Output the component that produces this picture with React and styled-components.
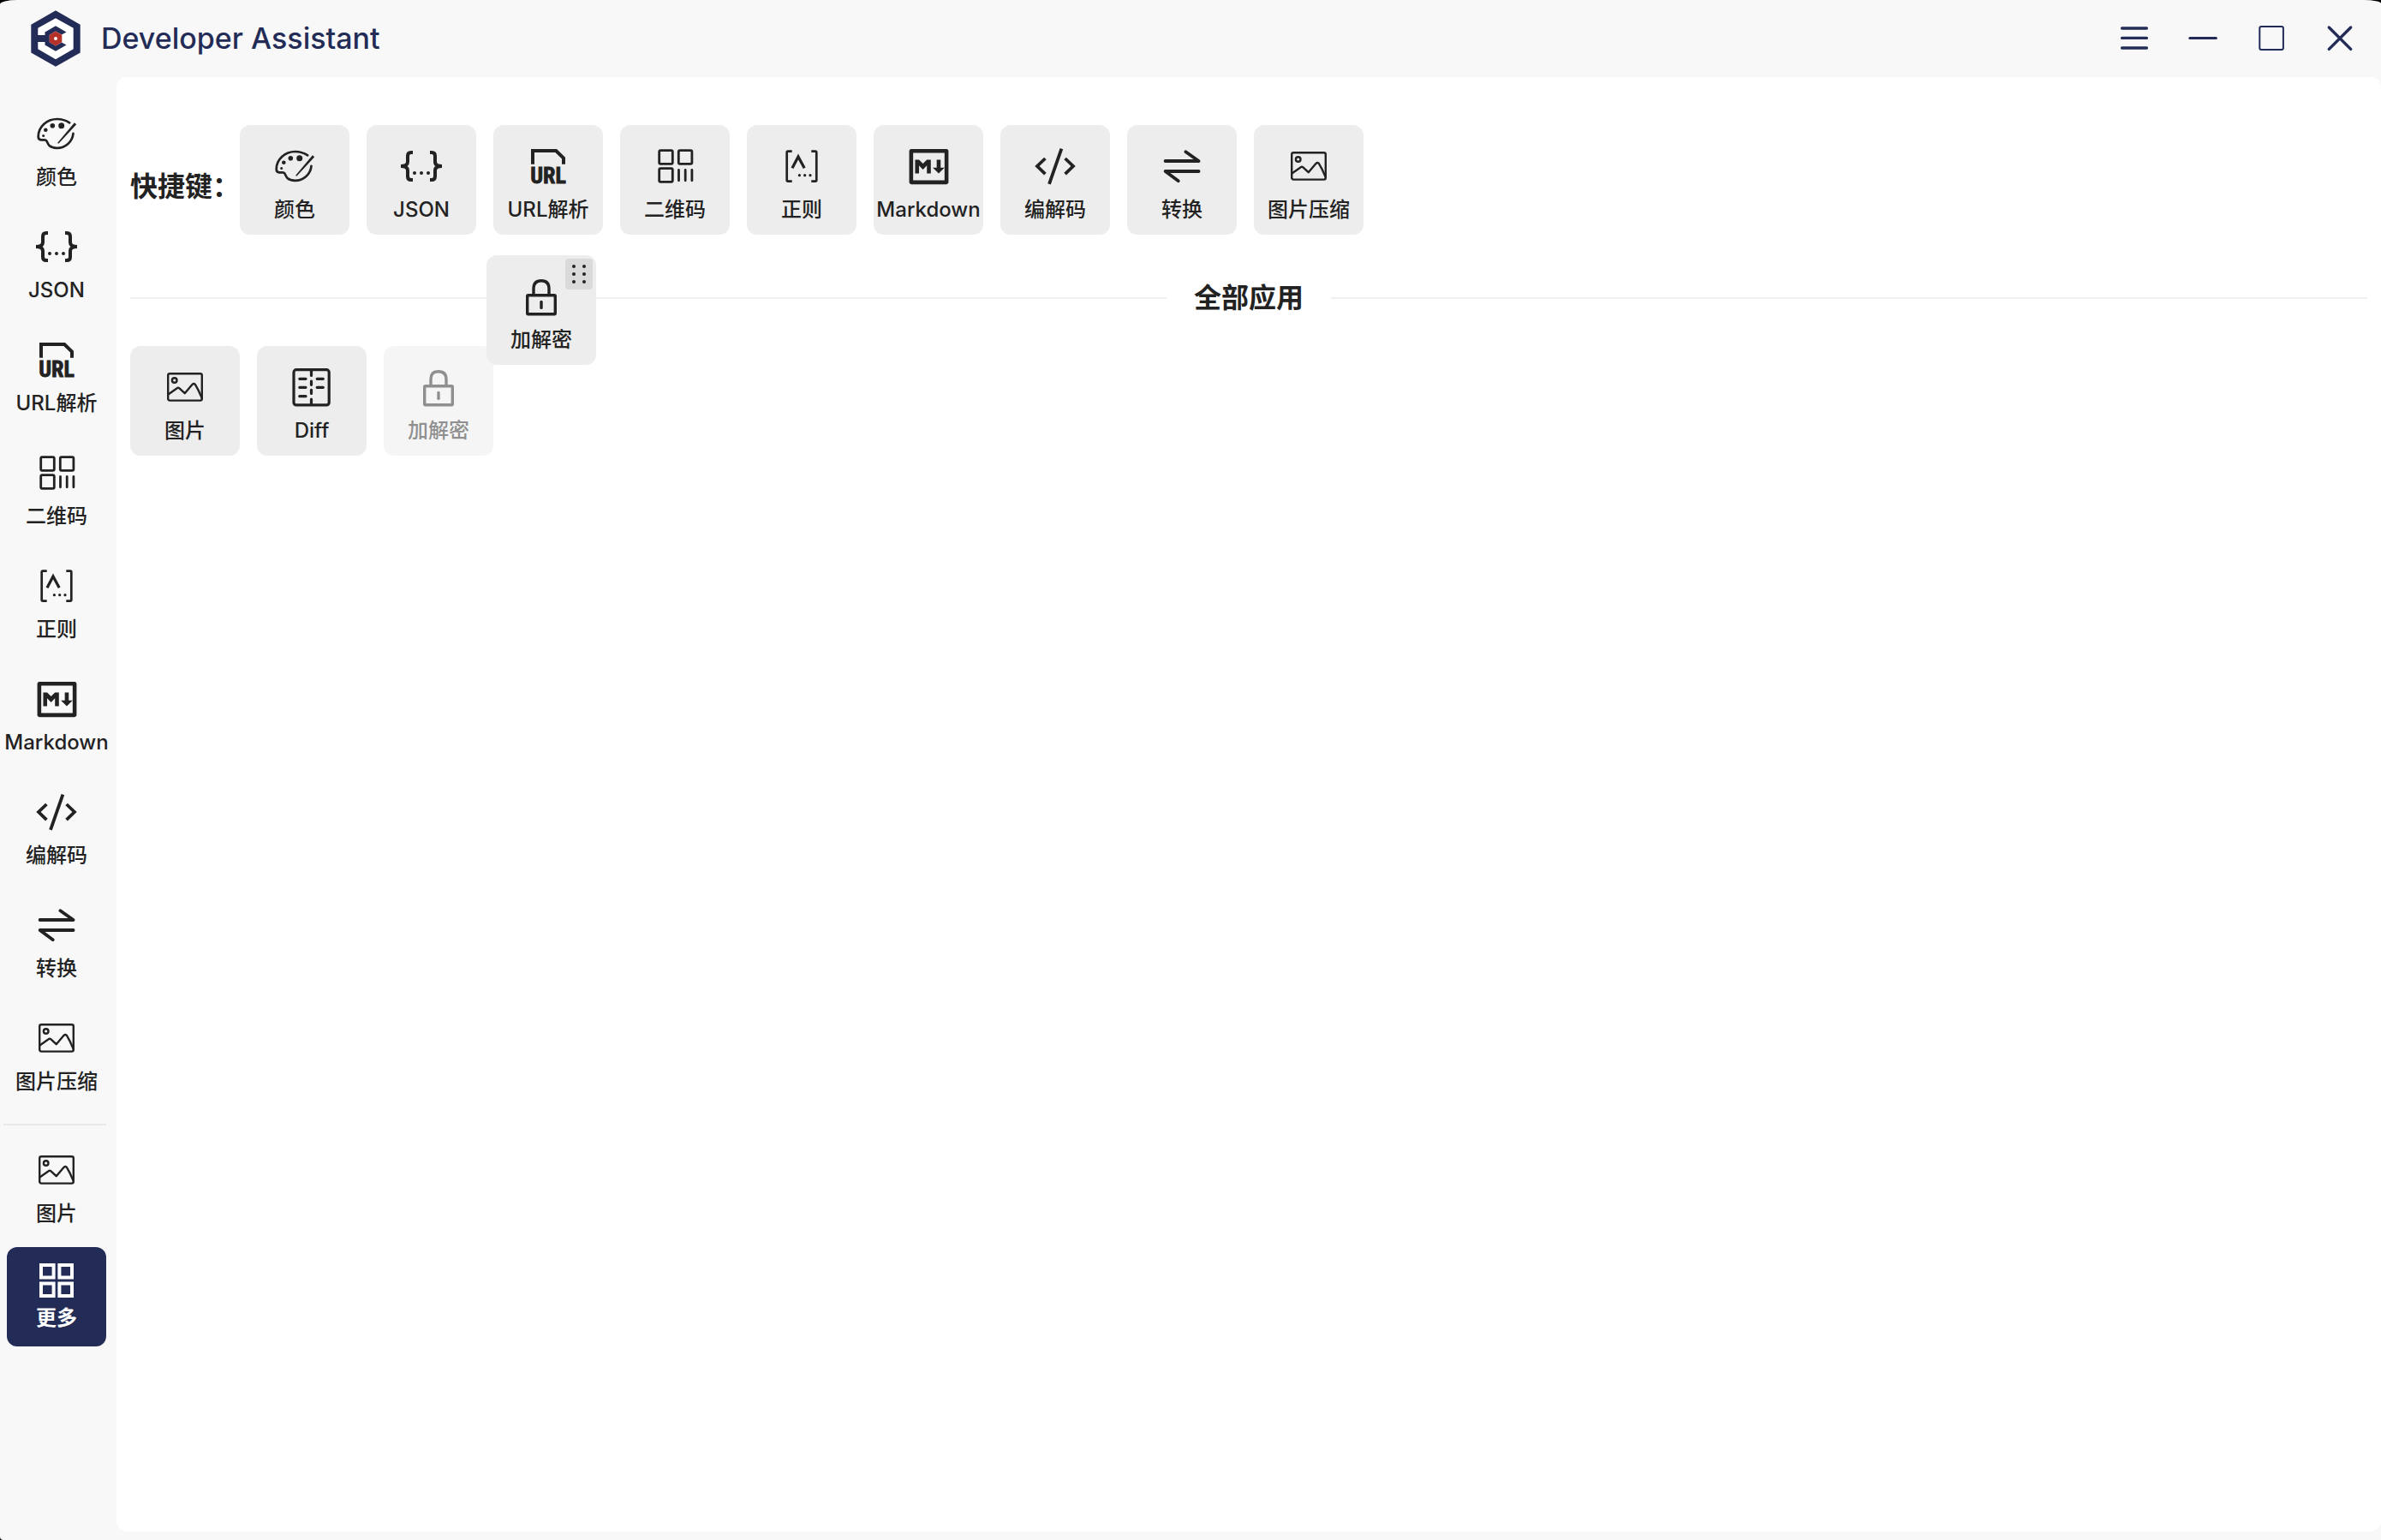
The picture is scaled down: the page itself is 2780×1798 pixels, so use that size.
import React from "react";
import styled, { createGlobalStyle } from "styled-components";
import { RiMarkdownLine } from "react-icons/ri";

const navy = "#232c56";
const ink = "#222222";

const GlobalStyle = createGlobalStyle`
  * { box-sizing: border-box; }
  body {
    margin: 0;
    background: #000;
    color: ${ink};
    font-family: Inter, "Noto Sans CJK SC", sans-serif;
    font-weight: 500;
  }
`;

const Window = styled.div`
  display: flex;
  flex-direction: column;
  min-height: 100vh;
  padding-bottom: 10px;
  background: #f8f8f8;
  border-radius: 20px 20px 0 4px / 5px 4px 0 4px;
`;

const TitleBar = styled.header`
  display: flex;
  align-items: center;
  justify-content: space-between;
  height: 90px;
  padding: 0 28px 0 32px;
  color: ${navy};
`;

const Brand = styled.div`
  display: flex;
  align-items: center;
  gap: 20px;
`;

const BrandName = styled.h1`
  margin: 0;
  font-size: 34px;
  font-weight: 500;
  line-height: 48px;
`;

const WindowControls = styled.div`
  display: flex;
  gap: 40px;
`;

const ControlButton = styled.button`
  display: flex;
  width: 40px;
  height: 40px;
  padding: 0;
  border: 0;
  background: none;
  color: inherit;
`;

const Body = styled.div`
  display: flex;
  flex: 1;
`;

const Sidebar = styled.nav`
  flex: none;
  width: 136px;
  padding: 24px 12px 0 4px;
`;

const NavList = styled.div`
  display: flex;
  flex-direction: column;
  gap: 16px;
  padding-left: 4px;
`;

const NavDivider = styled.hr`
  height: 2px;
  margin: 26px 0 10px;
  border: 0;
  background: #e9e9e9;
`;

const EntryButton = styled.button`
  display: flex;
  flex-direction: column;
  align-items: center;
  gap: 8px;
  padding: 0;
  border: 0;
  border-radius: 12px;
  color: inherit;
  font: inherit;
`;

const NavButton = styled(EntryButton)`
  height: 116px;
  padding-top: 18px;
  gap: ${(p) => (p.$active ? 4 : 8)}px;
  background: ${(p) => (p.$active ? navy : "none")};
  color: ${(p) => (p.$active ? "#fff" : "inherit")};
  font-weight: ${(p) => (p.$active ? 600 : 500)};
`;

const Tile = styled(EntryButton)`
  flex: none;
  width: 128px;
  height: 128px;
  padding-top: 24px;
  background: #ededed;
  opacity: ${(p) => (p.$ghost ? 0.5 : 1)};
`;

const DraggedTile = styled(Tile)`
  position: absolute;
  top: 208px;
  left: 432px;
`;

const DragHandle = styled.span`
  position: absolute;
  top: 4px;
  right: 4px;
  display: flex;
  width: 32px;
  height: 36px;
  border-radius: 4px;
  background: #dadada;
`;

const IconBox = styled.span`
  display: flex;
  align-items: center;
  justify-content: center;
  width: ${(p) => p.$size}px;
  height: ${(p) => p.$size}px;

  svg {
    flex: none;
    overflow: visible;
  }
`;

const Label = styled.span`
  font-size: 24px;
  line-height: 38px;
  white-space: nowrap;
`;

const Content = styled.main`
  position: relative;
  flex: 1;
  padding: 56px 16px;
  border-radius: 12px;
  background: #fff;
`;

const ShortcutRow = styled.section`
  display: flex;
  align-items: center;
`;

const Heading = styled.h2`
  margin: 0;
  font-size: 32px;
  font-weight: 600;
  line-height: 48px;
  white-space: nowrap;
`;

const RowHeading = styled(Heading)`
  padding-top: 16px;
`;

const TileGrid = styled.div`
  display: flex;
  flex-wrap: wrap;
  gap: 20px;
`;

const SectionTitle = styled.div`
  display: flex;
  align-items: center;
  gap: 32px;
  margin: 50px 0 32px;

  &::before,
  &::after {
    content: "";
    flex: 1;
    height: 2px;
    background: #f0f0f0;
  }
`;

const UrlText = styled.text`
  font-family: "Liberation Sans Narrow", "Roboto Condensed", "DejaVu Sans Condensed", Roboto, sans-serif;
  font-size: 26px;
  font-weight: 700;
`;

function Glyph({ size = 48, stroke = 3, round, children }) {
  return (
    <svg
      width={size}
      height={size}
      viewBox={`0 0 ${size} ${size}`}
      fill="none"
      stroke="currentColor"
      strokeWidth={stroke}
      strokeLinecap={round ? "round" : "butt"}
      strokeLinejoin={round ? "round" : "miter"}
      aria-hidden="true"
    >
      {children}
    </svg>
  );
}

function Dots({ points }) {
  return points.map(([x, y, r]) => (
    <circle key={`${x}-${y}`} cx={x} cy={y} r={r} fill="currentColor" stroke="none" />
  ));
}

const icons = {
  color: (
    <Glyph stroke={2.7} round>
      <path d="M39.2 11.3C35 8.6 30 7 24.7 7C12.5 7 2.7 16 2.7 27.5C2.7 30 3.6 31.3 6 31.4C8 31.5 9.5 31 11 31.6C13.6 32.6 13.2 35.6 15.6 38C18 40.2 21 40.8 24.3 40.8C34.5 40.8 42.5 33.5 43.5 23.8" />
      <path d="M44.9 11.2L47.2 13.2L26.6 35.4Q25 36 25.4 34.6Z" fill="currentColor" stroke="none" />
      <Dots points={[[29.7, 14.7, 3.5], [19.3, 14.7, 2.8], [11.3, 19.7, 2.3], [8.7, 26.6, 1.5]]} />
    </Glyph>
  ),
  json: (
    <Glyph stroke={4}>
      <path d="M14 8H12Q8 8 8 12V19Q8 24 0 24Q8 24 8 29V36Q8 40 12 40H14" />
      <path d="M34 8H36Q40 8 40 12V19Q40 24 48 24Q40 24 40 29V36Q40 40 36 40H34" />
      <Dots points={[[16, 32, 2], [24, 32, 2], [32, 32, 2]]} />
    </Glyph>
  ),
  url: (
    <Glyph stroke={4}>
      <path d="M6 21.7V6H33.2L42 14.6V21.7" />
      <UrlText x="24" y="44" textAnchor="middle" fill="currentColor" strokeWidth="0.8">
        URL
      </UrlText>
    </Glyph>
  ),
  qr: (
    <Glyph stroke={2.8} round>
      <rect x="5.7" y="5.7" width="15.6" height="15.6" rx="1.5" />
      <rect x="28.3" y="5.7" width="15.6" height="15.6" rx="1.5" />
      <rect x="5.7" y="26.7" width="15.6" height="15.6" rx="1.5" />
      <path d="M28.5 28.4V40.8M36.2 28.4V40.8M43.9 28.4V40.8" />
    </Glyph>
  ),
  regex: (
    <Glyph stroke={2.7}>
      <path d="M12.7 6.7H8Q6.7 6.7 6.7 8V40.2Q6.7 41.6 8 41.6H12.7M35.3 6.7H40Q41.3 6.7 41.3 8V40.2Q41.3 41.6 40 41.6H35.3" />
      <path d="M13 26.3L20 13L27.2 26.3" strokeWidth="3.2" />
      <Dots points={[[21.4, 34.7, 1.6], [27.7, 34.7, 1.6], [34, 34.7, 1.6]]} />
    </Glyph>
  ),
  markdown: <RiMarkdownLine size={55} aria-hidden="true" />,
  code: (
    <Glyph stroke={3.8}>
      <path d="M12.4 15L3 24L12.4 33.2M35.6 15L45 24L35.6 33.2M31.4 3.6L17 44.8" />
    </Glyph>
  ),
  convert: (
    <Glyph stroke={3.8} round>
      <path d="M4.6 18H43.6L28.4 7.2M43.6 30H4.6L19.8 41.2" />
    </Glyph>
  ),
  image: (
    <Glyph stroke={2.4} round>
      <rect x="4.2" y="8.2" width="39.6" height="31.4" rx="2" />
      <circle cx="11.7" cy="16" r="2.8" />
      <path d="M4.4 32.4L14.4 25.4Q16 24.2 17.5 25.4L23.7 31.2L32.6 20.8Q34.5 19 36 21L40 28.4L43.6 36.4" />
    </Glyph>
  ),
  lock: (
    <Glyph stroke={3.4} round>
      <rect x="7.7" y="22.7" width="32.6" height="22" rx="1" />
      <path d="M15 22V15Q15 5.7 24 5.7Q33 5.7 33 15V22M24 30.4V37.4" />
    </Glyph>
  ),
  diff: (
    <Glyph stroke={3.2} round>
      <rect x="3" y="3.7" width="41.2" height="41.2" rx="3" />
      <path d="M23.5 4V10.4M23.5 17V21.3M23.5 27.3V31.5M23.5 38V44M9.8 14.3H17M9.8 24.3H17M9.8 34.7H17M30.2 14.3H37.3M30.2 24.3H37.3" />
    </Glyph>
  ),
  more: (
    <Glyph size={42} stroke={4}>
      <path d="M3 3H17.6V17.6H3ZM24.4 3H39V17.6H24.4ZM3 24.4H17.6V39H3ZM24.4 24.4H39V39H24.4Z" />
    </Glyph>
  ),
};

const apps = {
  color: "颜色",
  json: "JSON",
  url: "URL解析",
  qr: "二维码",
  regex: "正则",
  markdown: "Markdown",
  code: "编解码",
  convert: "转换",
};

const shortcuts = [
  ...Object.entries(apps).map(([icon, label]) => ({ icon, label })),
  { icon: "image", label: "图片压缩" },
];

const otherApps = [
  { icon: "image", label: "图片" },
  { icon: "diff", label: "Diff" },
  { icon: "lock", label: "加解密", ghost: true },
];

function Entry({ icon, label, iconSize = 48 }) {
  return (
    <>
      <IconBox $size={iconSize}>{icons[icon]}</IconBox>
      <Label>{label}</Label>
    </>
  );
}

function Logo() {
  return (
    <svg width="66" height="66" viewBox="0 0 66 66" aria-hidden="true">
      <path d="M33 0.3L61.7 16.7V49.6L33 65.8L4.3 49.6V16.7Z" fill={navy} />
      <path d="M33 9.3L53.7 20.7V45.3L33 57.3L12.3 45.3V20.7Z" fill="#fff" />
      <path
        d="M12 29H20.5V25.5L33 18.3L45.5 25.5L40 28.6L33 24.6L25.8 28.8V37.2L33 41.4L40 37.4L45.5 40.5L33 47.7L20.5 40.5V37H12Z"
        fill={navy}
      />
      <path d="M33 24.6L40.3 28.8V37.2L33 41.4L25.7 37.2V28.8Z" fill="#b5322b" />
      <circle cx="33" cy="33" r="2" fill="#fff" />
    </svg>
  );
}

export default function App() {
  return (
    <>
      <GlobalStyle />
      <Window>
        <TitleBar>
          <Brand>
            <Logo />
            <BrandName>Developer Assistant</BrandName>
          </Brand>
          <WindowControls>
            <ControlButton aria-label="菜单">
              <Glyph size={40} stroke={3.4} round>
                <path d="M5.6 8H34.4M5.6 19.4H34.4M5.6 31H34.4" />
              </Glyph>
            </ControlButton>
            <ControlButton aria-label="最小化">
              <Glyph size={40} stroke={3} round>
                <path d="M4.8 19.5H35.4" />
              </Glyph>
            </ControlButton>
            <ControlButton aria-label="最大化">
              <Glyph size={40} stroke={2} round>
                <rect x="6.3" y="6" width="27.6" height="27" rx="2" />
              </Glyph>
            </ControlButton>
            <ControlButton aria-label="关闭">
              <Glyph size={40} stroke={3.4} round>
                <path d="M7.3 7L32.7 32.4M32.7 7L7.3 32.4" />
              </Glyph>
            </ControlButton>
          </WindowControls>
        </TitleBar>
        <Body>
          <Sidebar>
            <NavList>
              {shortcuts.map((app) => (
                <NavButton key={app.label}>
                  <Entry {...app} />
                </NavButton>
              ))}
            </NavList>
            <NavDivider />
            <NavList>
              <NavButton>
                <Entry icon="image" label="图片" />
              </NavButton>
              <NavButton $active aria-current="page">
                <Entry icon="more" label="更多" iconSize={42} />
              </NavButton>
            </NavList>
          </Sidebar>
          <Content>
            <ShortcutRow>
              <RowHeading>快捷键：</RowHeading>
              <TileGrid>
                {shortcuts.map((app) => (
                  <Tile key={app.label}>
                    <Entry {...app} />
                  </Tile>
                ))}
              </TileGrid>
            </ShortcutRow>
            <SectionTitle>
              <Heading>全部应用</Heading>
            </SectionTitle>
            <TileGrid>
              {otherApps.map((app) => (
                <Tile key={app.label} $ghost={app.ghost}>
                  <Entry {...app} />
                </Tile>
              ))}
            </TileGrid>
            <DraggedTile>
              <Entry icon="lock" label="加解密" />
              <DragHandle>
                <svg width="32" height="36" viewBox="0 0 32 36" aria-hidden="true">
                  <Dots
                    points={[
                      [10, 9, 2], [22, 9, 2],
                      [10, 18, 2], [22, 18, 2],
                      [10, 27, 2], [22, 27, 2],
                    ]}
                  />
                </svg>
              </DragHandle>
            </DraggedTile>
          </Content>
        </Body>
      </Window>
    </>
  );
}
